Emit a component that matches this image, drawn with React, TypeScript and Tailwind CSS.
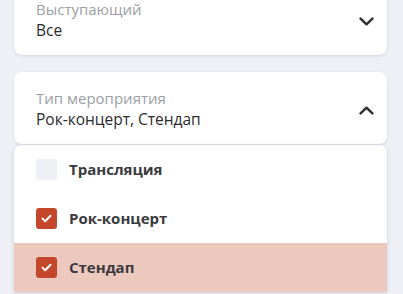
import { useState } from "react";

const font = { fontFamily: '"Open Sans", "Noto Sans", sans-serif' };

const Chevron = ({ up }: { up?: boolean }) => (
    <svg
        width="15"
        height="9"
        viewBox="0 0 15 9"
        fill="none"
        className={up ? "rotate-180" : ""}
    >
        <path
            d="M1.6 1.7 7.5 7.3l5.9-5.6"
            stroke="#2f2f33"
            strokeWidth="2.5"
            strokeLinecap="round"
            strokeLinejoin="round"
        />
    </svg>
);

const Select = ({
    label,
    value,
    open,
    className = "",
}: {
    label: string;
    value: string;
    open?: boolean;
    className?: string;
}) => (
    <div
        className={`h-[72px] bg-white rounded-lg shadow-[0_1px_3px_rgba(20,30,60,0.12)] pl-[22px] pr-[13px] flex items-center justify-between ${className}`}
    >
        <div className="flex flex-col mt-[2px]">
            <span className="text-[15px] leading-[20px] text-[#9c9ea3]">
                {label}
            </span>
            <span className="text-[15.5px] leading-[22px] text-[#2b2b2e]">
                {value}
            </span>
        </div>
        <div className="mt-[5px]">
            <Chevron up={open} />
        </div>
    </div>
);

const Check = ({ checked }: { checked: boolean }) =>
    checked ? (
        <div className="w-[21px] h-[21px] rounded-[3px] bg-[#c4472b] flex items-center justify-center">
            <svg width="11" height="9" viewBox="0 0 11 9" fill="none">
                <path
                    d="M1.5 4.6 4.2 7.2 9.5 1.8"
                    stroke="white"
                    strokeWidth="2"
                    strokeLinecap="round"
                    strokeLinejoin="round"
                />
            </svg>
        </div>
    ) : (
        <div className="w-[21px] h-[21px] rounded-[2px] bg-[#eef0f5]" />
    );

const App = () => {
    const [options] = useState([
        { label: "Трансляция", checked: false, active: false },
        { label: "Рок-концерт", checked: true, active: false },
        { label: "Стендап", checked: true, active: true },
    ]);

    return (
        <div
            className="w-[403px] h-[294px] overflow-hidden bg-[#eef0f5] pl-[14px] pr-[16px]"
            style={font}
        >
            <Select className="-mt-[17px]" label="Выступающий" value="Все" />
            <Select
                className="mt-[17px]"
                label="Тип мероприятия"
                value="Рок-концерт, Стендап"
                open
            />
            <div className="mt-[1px] bg-white rounded-t-lg shadow-[0_1px_4px_rgba(20,30,60,0.14)] overflow-hidden">
                {options.map((o) => (
                    <div
                        key={o.label}
                        className={`h-[49px] flex items-center gap-[12px] pl-[22px] ${
                            o.active ? "bg-[#edc8bf]" : ""
                        }`}
                    >
                        <Check checked={o.checked} />
                        <span className="text-[15px] font-bold text-[#3a3a3d]">
                            {o.label}
                        </span>
                    </div>
                ))}
            </div>
        </div>
    );
};

export default App;
